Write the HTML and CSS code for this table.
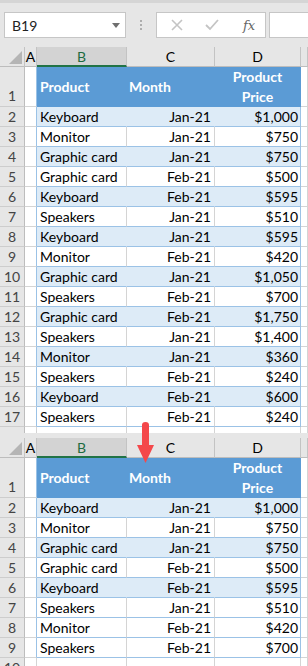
FILE: index.html
```html
<!DOCTYPE html>
<html>
<head>
<meta charset="utf-8">
<link rel="stylesheet" href="styles.css">
</head>
<body>
<div class="toolbar">
  <div class="namebox"><span>B19</span><svg class="dd" width="8" height="5" viewBox="0 0 8 5"><polygon points="0,0 8,0 4,5" fill="#6f6f6f"/></svg></div>
  <div class="dots"><i></i><i></i><i></i></div>
  <div class="fxbox">
    <svg class="ic" width="12" height="12" viewBox="0 0 12 12"><path d="M1 1 L11 11 M11 1 L1 11" stroke="#c4c4c4" stroke-width="1.6" fill="none"/></svg>
    <svg class="ic" width="14" height="12" viewBox="0 0 14 12"><path d="M1 6 L5 10 L13 1" stroke="#c4c4c4" stroke-width="1.8" fill="none"/></svg>
    <span class="fx">fx</span>
  </div>
  <div class="formula"></div>
</div>

<div class="sheet">
  <div class="row hdr"><div class="corner"><svg width="24" height="20" viewBox="0 0 24 20"><polygon points="9,17 22,17 22,4" fill="#b5b5b5"/></svg></div><div class="ch">A</div><div class="ch sel">B</div><div class="ch">C</div><div class="ch">D</div><div class="ch"></div></div>
  <div class="row r1 t"><div class="rh">1</div><div class="a"></div><div class="th b">Product</div><div class="th c">Month</div><div class="th d">Product<br>Price</div><div class="e"></div></div>
  <div class="row t band"><div class="rh">2</div><div class="a"></div><div class="b">Keyboard</div><div class="c">Jan-21</div><div class="d">$1,000</div><div class="e"></div></div>
  <div class="row t"><div class="rh">3</div><div class="a"></div><div class="b">Monitor</div><div class="c">Jan-21</div><div class="d">$750</div><div class="e"></div></div>
  <div class="row t band"><div class="rh">4</div><div class="a"></div><div class="b">Graphic card</div><div class="c">Jan-21</div><div class="d">$750</div><div class="e"></div></div>
  <div class="row t"><div class="rh">5</div><div class="a"></div><div class="b">Graphic card</div><div class="c">Feb-21</div><div class="d">$500</div><div class="e"></div></div>
  <div class="row t band"><div class="rh">6</div><div class="a"></div><div class="b">Keyboard</div><div class="c">Feb-21</div><div class="d">$595</div><div class="e"></div></div>
  <div class="row t"><div class="rh">7</div><div class="a"></div><div class="b">Speakers</div><div class="c">Jan-21</div><div class="d">$510</div><div class="e"></div></div>
  <div class="row t band"><div class="rh">8</div><div class="a"></div><div class="b">Keyboard</div><div class="c">Jan-21</div><div class="d">$595</div><div class="e"></div></div>
  <div class="row t"><div class="rh">9</div><div class="a"></div><div class="b">Monitor</div><div class="c">Feb-21</div><div class="d">$420</div><div class="e"></div></div>
  <div class="row t band"><div class="rh">10</div><div class="a"></div><div class="b">Graphic card</div><div class="c">Jan-21</div><div class="d">$1,050</div><div class="e"></div></div>
  <div class="row t"><div class="rh">11</div><div class="a"></div><div class="b">Speakers</div><div class="c">Feb-21</div><div class="d">$700</div><div class="e"></div></div>
  <div class="row t band"><div class="rh">12</div><div class="a"></div><div class="b">Graphic card</div><div class="c">Feb-21</div><div class="d">$1,750</div><div class="e"></div></div>
  <div class="row t"><div class="rh">13</div><div class="a"></div><div class="b">Speakers</div><div class="c">Jan-21</div><div class="d">$1,400</div><div class="e"></div></div>
  <div class="row t band"><div class="rh">14</div><div class="a"></div><div class="b">Monitor</div><div class="c">Jan-21</div><div class="d">$360</div><div class="e"></div></div>
  <div class="row t"><div class="rh">15</div><div class="a"></div><div class="b">Speakers</div><div class="c">Feb-21</div><div class="d">$240</div><div class="e"></div></div>
  <div class="row t band"><div class="rh">16</div><div class="a"></div><div class="b">Keyboard</div><div class="c">Feb-21</div><div class="d">$600</div><div class="e"></div></div>
  <div class="row t"><div class="rh">17</div><div class="a"></div><div class="b">Speakers</div><div class="c">Feb-21</div><div class="d">$240</div><div class="e"></div></div>
  <div class="row cut"><div class="rh"></div><div class="a"></div><div class="b"></div><div class="c"></div><div class="d"></div><div class="e"></div></div>
</div>

<div class="gap"></div>

<div class="sheet">
  <div class="row hdr"><div class="corner"><svg width="24" height="20" viewBox="0 0 24 20"><polygon points="9,17 22,17 22,4" fill="#b5b5b5"/></svg></div><div class="ch">A</div><div class="ch sel">B</div><div class="ch">C</div><div class="ch">D</div><div class="ch"></div></div>
  <div class="row r1 t"><div class="rh">1</div><div class="a"></div><div class="th b">Product</div><div class="th c">Month</div><div class="th d">Product<br>Price</div><div class="e"></div></div>
  <div class="row t band"><div class="rh">2</div><div class="a"></div><div class="b">Keyboard</div><div class="c">Jan-21</div><div class="d">$1,000</div><div class="e"></div></div>
  <div class="row t"><div class="rh">3</div><div class="a"></div><div class="b">Monitor</div><div class="c">Jan-21</div><div class="d">$750</div><div class="e"></div></div>
  <div class="row t band"><div class="rh">4</div><div class="a"></div><div class="b">Graphic card</div><div class="c">Jan-21</div><div class="d">$750</div><div class="e"></div></div>
  <div class="row t"><div class="rh">5</div><div class="a"></div><div class="b">Graphic card</div><div class="c">Feb-21</div><div class="d">$500</div><div class="e"></div></div>
  <div class="row t band"><div class="rh">6</div><div class="a"></div><div class="b">Keyboard</div><div class="c">Feb-21</div><div class="d">$595</div><div class="e"></div></div>
  <div class="row t"><div class="rh">7</div><div class="a"></div><div class="b">Speakers</div><div class="c">Jan-21</div><div class="d">$510</div><div class="e"></div></div>
  <div class="row t"><div class="rh">8</div><div class="a"></div><div class="b">Monitor</div><div class="c">Feb-21</div><div class="d">$420</div><div class="e"></div></div>
  <div class="row t"><div class="rh">9</div><div class="a"></div><div class="b">Speakers</div><div class="c">Feb-21</div><div class="d">$700</div><div class="e"></div></div>
  <div class="row"><div class="rh">10</div><div class="a"></div><div class="b"></div><div class="c"></div><div class="d"></div><div class="e"></div></div>
</div>

<svg class="arrow" width="20" height="44" viewBox="0 0 20 44"><path d="M6 4 Q6 1 9.5 1 Q13 1 13 4 L13 24 L18 24 L9.5 42 L1 24 L6 24 Z" fill="#f4484b"/></svg>
</body>
</html>
```
FILE: styles.css
```css
body {
  margin: 0;
  width: 308px;
  height: 666px;
  overflow: hidden;
  position: relative;
  background: #fff;
  font-family: Lato, "Liberation Sans", sans-serif;
  font-size: 14px;
  color: #000;
}

.toolbar {
  box-sizing: border-box;
  height: 47px;
  border-top: 3px solid #d5d5d5;
  background: #e6e6e6;
  padding: 9px 0 0 4px;
  display: flex;
  align-items: flex-start;
}
.namebox, .fxbox, .formula {
  box-sizing: border-box;
  height: 26px;
  background: #fff;
  border: 1px solid #c6c6c6;
}
.namebox {
  width: 122px;
  display: flex;
  align-items: center;
  justify-content: space-between;
  padding: 0 5px 0 7px;
  color: #222;
}
.dots {
  width: 30px;
  height: 26px;
  display: flex;
  flex-direction: column;
  align-items: center;
  justify-content: center;
  gap: 2px;
}
.dots i {
  display: block;
  width: 2px;
  height: 2px;
  background: #adadad;
}
.fxbox {
  width: 110px;
  display: flex;
  align-items: center;
  padding-left: 14px;
  gap: 22px;
}
.fx {
  font-family: "DejaVu Serif", "Liberation Serif", serif;
  font-style: italic;
  font-size: 13px;
  color: #666;
  margin-left: 2px;
}
.formula {
  flex: 1;
  margin-left: 3px;
  border-right: none;
}

.row {
  display: grid;
  grid-template-columns: 25px 12px 90px 88px 86px 1fr;
  height: 20px;
}
.row > div {
  box-sizing: border-box;
  border-right: 1px solid #d4d4d4;
  border-bottom: 1px solid #d4d4d4;
  display: flex;
  align-items: center;
  white-space: nowrap;
  overflow: hidden;
}
.row > .rh {
  background: #e6e6e6;
  justify-content: center;
  color: #444;
  border-right-color: #bdbdbd;
  border-bottom-color: #cdcdcd;
}
.hdr > div {
  background: #e6e6e6;
  justify-content: center;
  border-right-color: #c3c3c3;
  border-bottom-color: #bdbdbd;
}
.hdr > .corner {
  align-items: stretch;
  justify-content: flex-start;
}
.hdr > .sel {
  background: #d3d3d3;
  color: #1e6b41;
  border-bottom: 2px solid #217346;
}

.row > .b { padding-left: 3px; }
.row > .c { justify-content: flex-end; padding-right: 3px; }
.row > .d { justify-content: flex-end; padding-right: 2px; }

.t > .a { border-right-color: #9bc2e6; }
.t > .b, .t > .c, .t > .d { border-bottom-color: #9bc2e6; }
.t > .d { border-right-color: #9bc2e6; }
.band > .b, .band > .c { background: #ddebf7; border-right-color: #ddebf7; }
.band > .d { background: #ddebf7; }

.r1 { height: 40px; }
.r1 > .rh { align-items: flex-end; padding-bottom: 2px; }
.r1 > .th {
  background: #5b9bd5;
  color: #fff;
  font-weight: bold;
  border-right-color: #5b9bd5;
  border-bottom-color: #5b9bd5;
}
.r1 > .th.c { justify-content: flex-start; padding-left: 2px; }
.r1 > .th.d {
  justify-content: center;
  text-align: center;
  line-height: 20px;
  padding: 0;
  border-right-color: #5b9bd5;
}

.cut { height: 6px; }
.cut > div { border-bottom: none; }

.gap {
  height: 5px;
  background: #e6e6e6;
}

.arrow {
  position: absolute;
  left: 136px;
  top: 421px;
}
```
